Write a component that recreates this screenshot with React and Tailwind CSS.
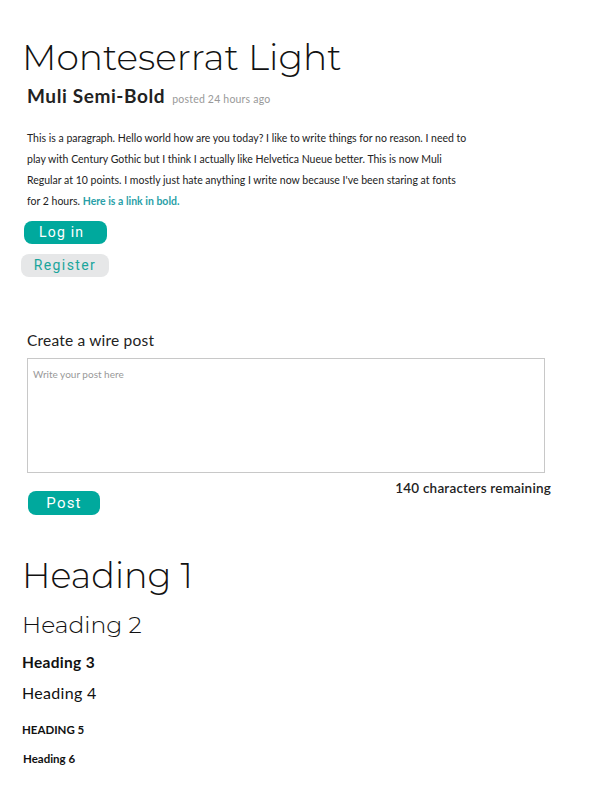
export default function App() {
    const mont = { fontFamily: 'Montserrat, Inter, "Open Sans", sans-serif' };
    return (
        <div className="bg-white min-h-[792px] w-[612px] text-[#1a1a1a] font-['Lato','Noto_Sans',sans-serif]">
            <div className="pl-[22px] pt-[34px]">
                <h1 style={mont} className="font-light text-[36px] leading-[46px] text-[#111]">
                    Monteserrat Light
                </h1>
                <div className="flex items-baseline gap-[7px] pl-[5px] mt-[2px]">
                    <span className="font-bold text-[19px] tracking-[0.6px] text-[#222]">Muli Semi-Bold</span>
                    <span className="text-[10.5px] text-[#999] tracking-[0.2px]">posted 24 hours ago</span>
                </div>
                <p className="pl-[5px] mt-[17px] w-[500px] text-[10.5px] leading-[21px] text-[#222]">
                    This is a paragraph. Hello world how are you today? I like to write things for no reason. I need to<br />
                    play with Century Gothic but I think I actually like Helvetica Nueue better. This is now Muli<br />
                    Regular at 10 points. I mostly just hate anything I write now because I've been staring at fonts<br />
                    for 2 hours.{' '}
                    <a href="#" className="font-bold text-[#2a9fa8]">Here is a link in bold.</a>
                </p>

                <div className="flex flex-col items-start mt-[9px] font-['Roboto',sans-serif]">
                    <button className="ml-[2px] w-[83px] h-[23px] rounded-[8px] bg-[#00a99d] text-white text-[14px] tracking-[1.2px] leading-[23px] text-left pl-[15px]">
                        Log in
                    </button>
                    <button className="mt-[10px] ml-[-1px] w-[88px] h-[23px] rounded-[8px] bg-[#e6e7e8] text-[#1aa59c] text-[14px] tracking-[1.4px] leading-[23px]">
                        Register
                    </button>
                </div>

                <div className="mt-[52px] pl-[5px] w-[528px]">
                    <div className="text-[15.5px] text-[#222] tracking-[0.2px]">Create a wire post</div>
                    <textarea
                        placeholder="Write your post here"
                        className="mt-[6px] block w-[518px] h-[115px] border border-[#c8c8c8] px-[5px] py-[8px] text-[10px] placeholder:text-[#999] resize-none outline-none"
                    />
                    <div className="flex justify-end mt-[5px] mr-[-1px] text-[13.5px] leading-[20px] font-semibold tracking-[0.2px] text-[#222]">140 characters remaining</div>
                    <button className="block mt-[-7px] ml-[1px] w-[72px] h-[24px] rounded-[8px] bg-[#00a99d] text-white text-[15px] tracking-[1.2px] font-['Roboto',sans-serif]">
                        Post
                    </button>
                </div>

                <div className="mt-[39px]">
                    <h1 style={mont} className="font-light text-[35px] leading-[44px] text-[#111]">Heading 1</h1>
                    <h2 style={mont} className="font-light text-[23.5px] leading-[30px] mt-[12px] text-[#111]">Heading 2</h2>
                    <h3 className="font-bold text-[15.5px] leading-[20px] mt-[12px] tracking-[0.3px] text-[#111]">Heading 3</h3>
                    <h4 className="text-[16px] leading-[20px] mt-[11px] tracking-[0.3px] text-[#111]">Heading 4</h4>
                    <h5 className="font-bold text-[11.5px] leading-[14px] mt-[20px] uppercase text-[#111]">Heading 5</h5>
                    <h6 className="font-bold text-[11.5px] leading-[14px] mt-[15px] pl-[1px] text-[#111]">Heading 6</h6>
                </div>
            </div>
        </div>
    );
}
